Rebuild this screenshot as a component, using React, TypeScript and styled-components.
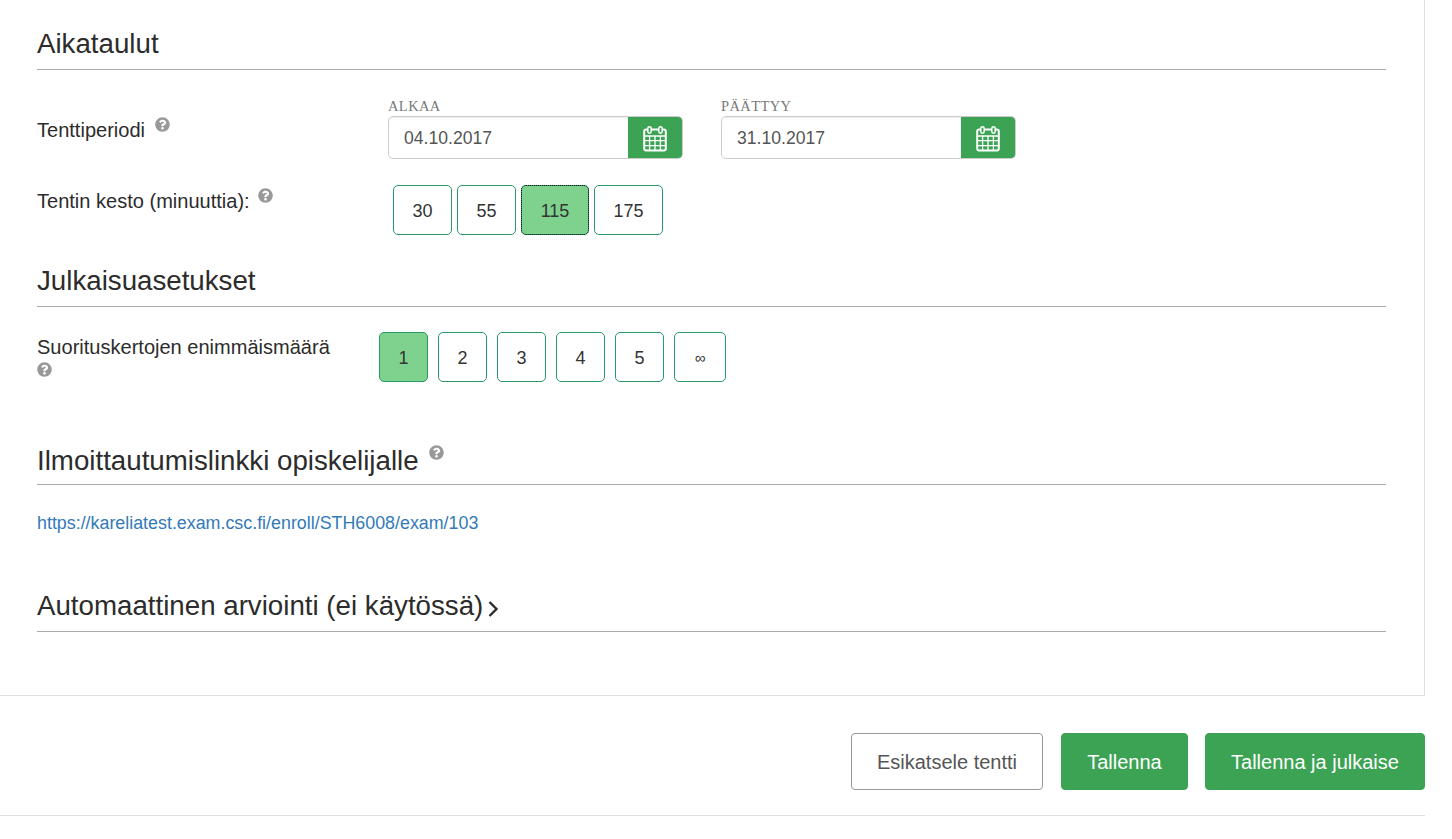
import React from 'react'
import styled, { createGlobalStyle } from 'styled-components'
import { FaQuestionCircle } from 'react-icons/fa'

const GlobalStyle = createGlobalStyle`
  html, body {
    margin: 0;
    padding: 0;
    background: #fff;
    color: #2c2c2c;
    font-family: "Liberation Sans", Arial, sans-serif;
  }
`

const Page = styled.div`
  width: 1452px;
  height: 839px;
  overflow: hidden;
`

const Panel = styled.main`
  box-sizing: border-box;
  width: 1425px;
  height: 696px;
  padding: 30px 38px 0 37px;
  border-right: 1px solid #dfdfdf;
  border-bottom: 1px solid #dfdfdf;
`

const Heading = styled.h2<{ $top: number }>`
  box-sizing: border-box;
  height: 40px;
  margin: ${(p) => p.$top}px 0 0;
  border-bottom: 1px solid #aaa;
  font-size: 27.7px;
  font-weight: 400;
  line-height: 28px;
  color: #2c2c2c;
  white-space: nowrap;
`

const Row = styled.div<{ $top: number; $columnWidth: number }>`
  display: grid;
  grid-template-columns: ${(p) => p.$columnWidth}px 1fr;
  margin-top: ${(p) => p.$top}px;
`

const RowLabel = styled.div<{ $top: number }>`
  padding-top: ${(p) => p.$top}px;
  font-size: 20.05px;
  line-height: 24px;
  color: #2c2c2c;
`

const Help = styled(FaQuestionCircle)<{ $raised?: boolean; $gap?: number }>`
  width: 15px;
  height: 15px;
  color: #999;
  margin-left: ${(p) => p.$gap ?? 6}px;
  vertical-align: ${(p) => (p.$raised ? '10px' : '5px')};
`

const HelpBlock = styled(Help)`
  display: block;
  margin: 3px 0 0;
`

const DateFields = styled.div`
  display: flex;
  gap: 38px;
`

const DateField = styled.div`
  width: 295px;
`

const DateLabel = styled.div`
  height: 19px;
  font-family: "Liberation Serif", serif;
  font-size: 14.5px;
  line-height: 19px;
  letter-spacing: 0.4px;
  color: #777;
`

const InputGroup = styled.div`
  display: flex;
  box-sizing: border-box;
  height: 43px;
  border: 1px solid #ccc;
  border-radius: 5px;
  overflow: hidden;
`

const DateValue = styled.div`
  flex: 1;
  padding-left: 15px;
  font-size: 17.6px;
  line-height: 43px;
  color: #555;
  box-shadow: inset 0 1px 1px rgba(0, 0, 0, 0.075);
`

const CalendarButton = styled.div`
  display: flex;
  align-items: center;
  justify-content: center;
  box-sizing: border-box;
  width: 54px;
  padding-top: 3px;
  background: #3ba353;
`

const Choices = styled.div<{ $left: number; $gap: number }>`
  display: flex;
  gap: ${(p) => p.$gap}px;
  margin-left: ${(p) => p.$left}px;
`

const Choice = styled.div<{ $active?: boolean; $focused?: boolean; $width: number }>`
  box-sizing: border-box;
  width: ${(p) => p.$width}px;
  height: 50px;
  border: 1px solid #2b9a68;
  border-radius: 5px;
  background: ${(p) => (p.$active ? '#7fd28e' : '#fff')};
  font-size: 18px;
  line-height: 50px;
  text-align: center;
  color: #333;
  outline: ${(p) => (p.$focused ? '1px dotted #111' : 'none')};
  outline-offset: -1px;
`

const InfinityChoice = styled(Choice)`
  font-size: 15px;
`

const EnrollLink = styled.a`
  display: block;
  margin-top: 28px;
  font-size: 17.85px;
  line-height: 20px;
  color: #337ab7;
  text-decoration: none;
`

const Footer = styled.footer`
  box-sizing: border-box;
  display: flex;
  justify-content: flex-end;
  gap: 17px;
  width: 1425px;
  height: 120px;
  padding-top: 37px;
  border-bottom: 1px solid #dfdfdf;
`

const FooterButton = styled.button<{ $primary?: boolean; $width: number }>`
  box-sizing: border-box;
  width: ${(p) => p.$width}px;
  height: 57px;
  padding: 2px 0 0;
  border: 1px solid ${(p) => (p.$primary ? '#3ba353' : '#999')};
  border-radius: 4px;
  background: ${(p) => (p.$primary ? '#3ba353' : '#fff')};
  color: ${(p) => (p.$primary ? '#fff' : '#555')};
  font-family: inherit;
  font-size: 20px;
`

const PreviewButton = styled(FooterButton)`
  margin-right: 1px;
`

const Chevron = styled.svg`
  width: 11px;
  height: 18px;
  margin-left: 5px;
  vertical-align: -3px;
`

function CalendarIcon() {
  return (
    <svg width="24" height="26" viewBox="0 0 24 26" fill="none" stroke="#fff">
      <rect x="1.2" y="3.6" width="21.6" height="21" rx="2" strokeWidth="2" />
      <path d="M1.5 10h21M2 14.6h20M2 19.6h20M6.6 10v14M12 10v14M17.4 10v14" strokeWidth="1.3" />
      <rect x="4.8" y="0.8" width="3.4" height="6.4" rx="1.7" fill="#3ba353" strokeWidth="1.5" />
      <rect x="15.8" y="0.8" width="3.4" height="6.4" rx="1.7" fill="#3ba353" strokeWidth="1.5" />
    </svg>
  )
}

const durations = [
  { value: '30', width: 59 },
  { value: '55', width: 59 },
  { value: '115', width: 68, active: true },
  { value: '175', width: 69 },
]

export default function App() {
  return (
    <Page>
      <GlobalStyle />
      <Panel>
        <Heading $top={0}>Aikataulut</Heading>
        <Row $top={27} $columnWidth={351}>
          <RowLabel $top={20}>
            Tenttiperiodi
            <Help $gap={10} />
          </RowLabel>
          <DateFields>
            <DateField>
              <DateLabel>ALKAA</DateLabel>
              <InputGroup>
                <DateValue>04.10.2017</DateValue>
                <CalendarButton>
                  <CalendarIcon />
                </CalendarButton>
              </InputGroup>
            </DateField>
            <DateField>
              <DateLabel>PÄÄTTYY</DateLabel>
              <InputGroup>
                <DateValue>31.10.2017</DateValue>
                <CalendarButton>
                  <CalendarIcon />
                </CalendarButton>
              </InputGroup>
            </DateField>
          </DateFields>
        </Row>
        <Row $top={26} $columnWidth={351}>
          <RowLabel $top={3}>
            Tentin kesto (minuuttia):
            <Help $gap={8} />
          </RowLabel>
          <Choices $left={5} $gap={5}>
            {durations.map((d) => (
              <Choice key={d.value} $width={d.width} $active={d.active} $focused={d.active}>
                {d.value}
              </Choice>
            ))}
          </Choices>
        </Row>
        <Heading $top={32}>Julkaisuasetukset</Heading>
        <Row $top={25} $columnWidth={342}>
          <RowLabel $top={3}>
            Suorituskertojen enimmäismäärä
            <HelpBlock />
          </RowLabel>
          <Choices $left={0} $gap={10}>
            <Choice $width={49} $active>1</Choice>
            <Choice $width={49}>2</Choice>
            <Choice $width={49}>3</Choice>
            <Choice $width={49}>4</Choice>
            <Choice $width={49}>5</Choice>
            <InfinityChoice $width={52}>∞</InfinityChoice>
          </Choices>
        </Row>
        <Heading $top={63}>
          Ilmoittautumislinkki opiskelijalle
          <Help $raised $gap={10} />
        </Heading>
        <EnrollLink href="#">https://kareliatest.exam.csc.fi/enroll/STH6008/exam/103</EnrollLink>
        <Heading $top={59}>
          Automaattinen arviointi (ei käytössä)
          <Chevron viewBox="0 0 11 18" fill="none" stroke="#2c2c2c" strokeWidth="2.4">
            <path d="M1.5 2l7 7-7 7" />
          </Chevron>
        </Heading>
      </Panel>
      <Footer>
        <PreviewButton $width={192}>Esikatsele tentti</PreviewButton>
        <FooterButton $primary $width={127}>Tallenna</FooterButton>
        <FooterButton $primary $width={220}>Tallenna ja julkaise</FooterButton>
      </Footer>
    </Page>
  )
}
